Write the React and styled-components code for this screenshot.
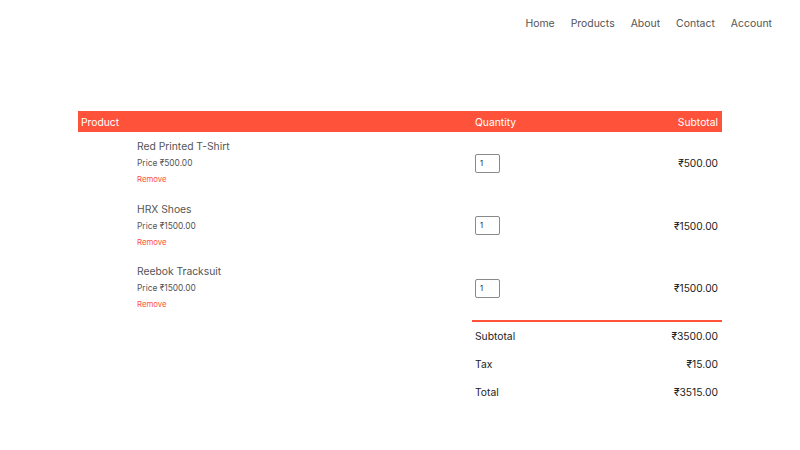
import React from "react";
import styled, { createGlobalStyle } from "styled-components";

const GlobalStyle = createGlobalStyle`
  html, body { margin: 0; padding: 0; background: #fff; }
  body { font-family: "Inter", "Noto Sans", "DejaVu Sans", sans-serif; color: #555; }
  * { box-sizing: border-box; }
`;

const Navbar = styled.nav`
  height: 46px;
  display: flex;
  justify-content: flex-end;
  align-items: center;
  gap: 16px;
  padding-right: 28px;
`;

const NavLink = styled.a`
  font-size: 10.45px;
  color: #555;
  text-decoration: none;
`;

const CartPage = styled.main`
  width: 644px;
  margin: 65px auto 0;
`;

const Row = styled.div`
  display: grid;
  grid-template-columns: 394px 1fr 1fr;
  align-items: center;
`;

const HeaderRow = styled(Row)`
  height: 21px;
  background: #ff523b;
  color: #fff;
  font-size: 10.3px;
`;

const HeadCell = styled.div`
  padding: 0 4px 0 3px;
  text-align: ${(p) => (p.$right ? "right" : "left")};
`;

const ItemRow = styled(Row)`
  height: 62.5px;
`;

const Cell = styled.div`
  padding: 0 4px 0 3px;
  text-align: ${(p) => (p.$right ? "right" : "left")};
`;

const ProductCell = styled(Cell)`
  height: 100%;
`;

const CartInfo = styled.div`
  display: flex;
  align-items: flex-start;
  padding-top: 6px;
  height: 100%;
`;

const Thumb = styled.div`
  width: 50px;
  height: 50px;
  margin-right: 6px;
  flex: none;
`;

const Info = styled.div`
  display: flex;
  flex-direction: column;
`;

const Name = styled.span`
  font-size: 10.3px;
  line-height: 16px;
  color: #555;
`;

const Price = styled.span`
  font-size: 8.4px;
  line-height: 16px;
  margin-top: 1px;
  color: #555;
`;

const Remove = styled.a`
  font-size: 7.8px;
  line-height: 16px;
  color: #ff523b;
  text-decoration: none;
`;

const QtyInput = styled.input`
  width: 25px;
  height: 19px;
  padding: 0 0 0 4px;
  font-family: inherit;
  font-size: 7.5px;
  color: #222;
  border: 1px solid #8a8a8a;
  border-radius: 2px;
  display: block;
`;

const Amount = styled.span`
  font-size: 10.2px;
  line-height: 12px;
  display: block;
  color: #222;
`;

const TotalsWrap = styled.div`
  display: flex;
  justify-content: flex-end;
`;

const TotalsTable = styled.div`
  width: 250px;
  border-top: 2px solid #ff523b;
`;

const TotalRow = styled.div`
  height: 28px;
  display: flex;
  justify-content: space-between;
  align-items: center;
  padding: 0 4px 0 3px;
  font-size: 10.3px;
  color: #222;
`;

const items = [
  { name: "Red Printed T-Shirt", price: "₹500.00", subtotal: "₹500.00" },
  { name: "HRX Shoes", price: "₹1500.00", subtotal: "₹1500.00" },
  { name: "Reebok Tracksuit", price: "₹1500.00", subtotal: "₹1500.00" },
];

const totals = [
  ["Subtotal", "₹3500.00"],
  ["Tax", "₹15.00"],
  ["Total", "₹3515.00"],
];

export default function App() {
  return (
    <>
      <GlobalStyle />
      <Navbar>
        {["Home", "Products", "About", "Contact", "Account"].map((l) => (
          <NavLink key={l} href="#">{l}</NavLink>
        ))}
      </Navbar>
      <CartPage>
        <HeaderRow>
          <HeadCell>Product</HeadCell>
          <HeadCell>Quantity</HeadCell>
          <HeadCell $right>Subtotal</HeadCell>
        </HeaderRow>
        {items.map((it) => (
          <ItemRow key={it.name}>
            <ProductCell>
              <CartInfo>
                <Thumb />
                <Info>
                  <Name>{it.name}</Name>
                  <Price>Price {it.price}</Price>
                  <Remove href="#">Remove</Remove>
                </Info>
              </CartInfo>
            </ProductCell>
            <Cell>
              <QtyInput type="text" defaultValue="1" />
            </Cell>
            <Cell $right>
              <Amount>{it.subtotal}</Amount>
            </Cell>
          </ItemRow>
        ))}
        <TotalsWrap>
          <TotalsTable>
            {totals.map(([l, v]) => (
              <TotalRow key={l}>
                <span>{l}</span>
                <span>{v}</span>
              </TotalRow>
            ))}
          </TotalsTable>
        </TotalsWrap>
      </CartPage>
    </>
  );
}
